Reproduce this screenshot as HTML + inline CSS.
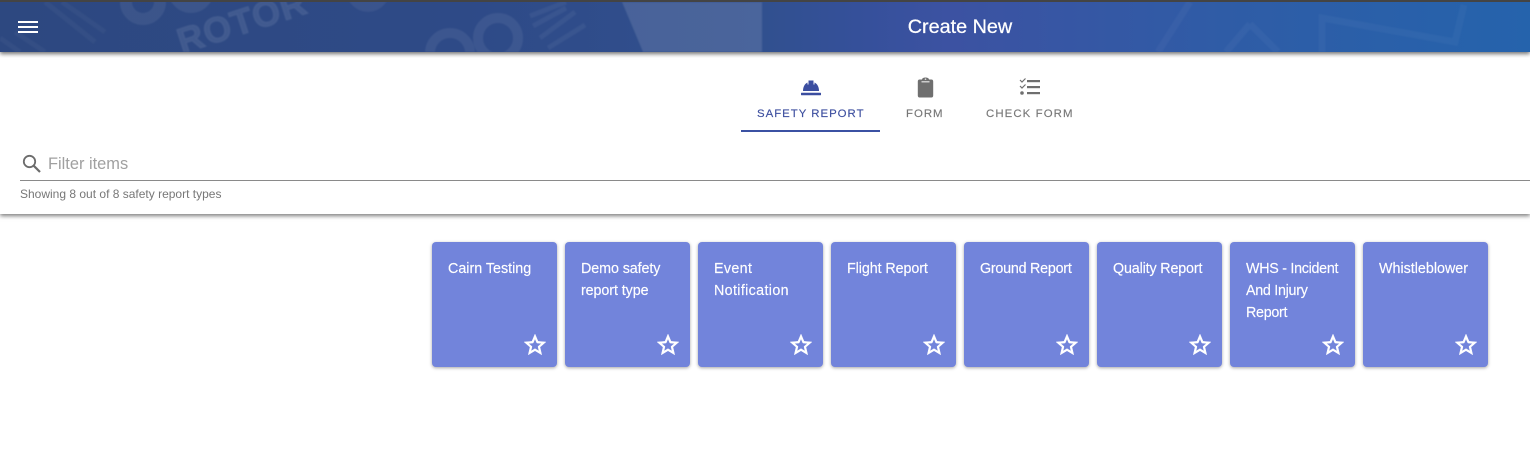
<!DOCTYPE html>
<html>
<head>
<meta charset="utf-8">
<style>
html,body{margin:0;padding:0;width:1530px;height:470px;overflow:hidden;background:#fff;font-family:"Liberation Sans",sans-serif}
.abs{position:absolute}
#hdr{left:0;top:0;width:1530px;height:52px;background:linear-gradient(90deg,#2d4880 0%,#2e4a87 30%,#31508f 50%,#35509a 56%,#3c52a2 62%,#2f5ca6 80%,#2563ac 100%);box-shadow:0 2px 4px rgba(0,0,0,.55);overflow:hidden;z-index:3}
#hdr:before{content:"";position:absolute;left:0;top:0;width:100%;height:2px;background:#444;z-index:2}
#title{left:0;width:1920px;top:15px;text-align:center;color:#fff;font-size:19.800px;line-height:24px;font-weight:400;-webkit-text-stroke:.25px #fff}
#panel{left:0;top:52px;width:1530px;height:162px;background:#fff;box-shadow:0 2px 4px rgba(0,0,0,.5);z-index:2}
.tab{position:absolute;top:107px;font-size:11.400px;line-height:14px;letter-spacing:1px;white-space:nowrap;color:#777;z-index:4;-webkit-text-stroke:.15px currentColor}
.card{position:absolute;top:242px;width:125px;height:125px;border-radius:4px;background:#7284db;box-shadow:0 1px 3px rgba(0,0,0,.35);color:#fff;font-size:14.300px;line-height:22px;-webkit-text-stroke:.15px #fff}
.card span{position:absolute;left:16px;top:16px;width:105px;white-space:nowrap}
.card svg{position:absolute;left:90px;top:90px}
.card path{stroke:#fff;stroke-width:.45}
</style>
</head>
<body>
<div id="hdr" class="abs">
<svg class="abs" style="left:0;top:0;filter:blur(.7px)" width="1530" height="52" viewBox="0 0 1530 52" fill="none">
  <g stroke="#ffffff" stroke-opacity=".035" stroke-width="5">
    <path d="M45 2 L95 42M62 2 L105 32M15 32 L45 52M0 38 L20 52"/>
  </g>
  <g stroke="#ffffff" stroke-opacity=".07">
    <circle cx="143" cy="2" r="17" stroke-width="12"/>
    <circle cx="191" cy="-10" r="17" stroke-width="12"/>
    <circle cx="450" cy="53" r="20" stroke-width="10"/>
    <ellipse cx="498" cy="38" rx="20" ry="20" stroke-width="10"/>
  </g>
  <circle cx="368" cy="-10" r="22" fill="#fff" fill-opacity=".06"/>
  <g stroke="#ffffff" stroke-opacity=".05" stroke-width="5">
    <path d="M530 16 L566 2M533 26 L566 8M540 38 L575 12M548 48 L585 25"/>
  </g>
  <path d="M622 2H762V52H643Z" fill="#fff" fill-opacity=".12"/>
  <g stroke="#ffffff" stroke-opacity=".035" stroke-width="7">
    <path d="M1190 2L1158 52M1250 24 L1278 52 M1250 24L1226 52"/>
    <path d="M1322 52V18L1455 42L1464 5"/>
  </g>
  <text x="182" y="54" transform="rotate(-18 182 54)" font-family="Liberation Sans" font-weight="700" font-size="36" fill="#fff" fill-opacity=".09" stroke="#fff" stroke-opacity=".05" stroke-width="1.500" letter-spacing="1">ROTOR</text>
</svg>
<svg class="abs" style="left:18px;top:20px" width="20" height="14"><rect y="1" width="20" height="2" fill="#fff"/><rect y="6" width="20" height="2" fill="#fff"/><rect y="11" width="20" height="2" fill="#fff"/></svg>
<div id="title" class="abs">Create New</div>
</div>

<div id="panel" class="abs"></div>

<svg class="abs" style="left:800px;top:77px;z-index:4" width="22" height="20" viewBox="0 0 22 20" fill="#3b4ea0"><path d="M3 14C3 10 4.500 7 7.500 5.500V7.500H8.500V3.500H13.500V7.500H14.500V5.500C17.500 7 19 10 19 14Z"/><rect x="1" y="15.700" width="20" height="2.500" rx=".5"/></svg>
<svg class="abs" style="left:916px;top:77px;z-index:4" width="18" height="21" viewBox="0 0 18 21"><path d="M3.500 2.500H6C6.300 1 7.500 .5 9.500 .5S12.700 1 13 2.500H15.500C16.500 2.500 17.200 3.300 17.200 4.500V18.500C17.200 19.700 16.500 20.500 15.500 20.500H3.500C2.500 20.500 1.800 19.700 1.800 18.500V4.500C1.800 3.300 2.500 2.500 3.500 2.500Z" fill="#6f6f6f"/><rect x="5.500" y="4" width="8" height="1.500" fill="#ccc"/><circle cx="9.500" cy="2.200" r=".8" fill="#ddd"/></svg>
<svg class="abs" style="left:1019px;top:77px;z-index:4" width="22" height="20" viewBox="0 0 22 20" fill="#6f6f6f"><rect x="8" y="3" width="13" height="2.200"/><rect x="8" y="9" width="13" height="2.200"/><rect x="8" y="15" width="13" height="2.200"/><path d="M1 3L3 5L6.500 1.500M1 9L3 11L6.500 7.500" fill="none" stroke="#6f6f6f" stroke-width="1.200"/><circle cx="3" cy="16" r="1.800"/></svg>

<div class="tab" style="left:757px;color:#3d4f9f;z-index:4">SAFETY REPORT</div>
<div class="tab" style="left:906px">FORM</div>
<div class="tab" style="left:986px;letter-spacing:1.1px">CHECK FORM</div>
<div class="abs" style="left:741px;top:130px;width:139px;height:2px;background:#3b51a3;z-index:4"></div>

<svg class="abs" style="left:21px;top:154px;z-index:4" width="21" height="21" viewBox="0 0 21 21" fill="none" stroke="#6c6c6c"><circle cx="8.500" cy="7.500" r="5.700" stroke-width="1.800"/><path d="M12.800 11.800L19 18" stroke-width="2.200"/></svg>
<div class="abs" style="left:48px;top:154px;font-size:16.400px;line-height:20px;color:#a0a0a0;z-index:4">Filter items</div>
<div class="abs" style="left:20px;top:180px;width:1510px;height:1px;background:#8a8a8a;z-index:4"></div>
<div class="abs" style="left:20px;top:187px;font-size:12px;line-height:14px;color:#777;z-index:4">Showing 8 out of 8 safety report types</div>

<div class="card" style="left:432px"><span>Cairn Testing</span><svg width="26" height="26" viewBox="0 0 24 24" fill="#fff"><path d="M22 9.240l-7.190-.62L12 2 9.190 8.630 2 9.240l5.460 4.730L5.820 21 12 17.270 18.180 21l-1.630-7.030L22 9.240zM12 15.400l-3.760 2.270 1-4.280-3.320-2.880 4.380-.38L12 6.100l1.710 4.040 4.380.38-3.320 2.880 1 4.280L12 15.400z"/></svg></div>
<div class="card" style="left:565px"><span style="letter-spacing:-.08px">Demo safety<br>report type</span><svg width="26" height="26" viewBox="0 0 24 24" fill="#fff"><path d="M22 9.240l-7.190-.62L12 2 9.190 8.630 2 9.240l5.460 4.730L5.820 21 12 17.270 18.180 21l-1.630-7.030L22 9.240zM12 15.400l-3.760 2.270 1-4.280-3.320-2.880 4.380-.38L12 6.100l1.710 4.040 4.380.38-3.320 2.880 1 4.280L12 15.400z"/></svg></div>
<div class="card" style="left:698px"><span style="letter-spacing:.35px">Event<br>Notification</span><svg width="26" height="26" viewBox="0 0 24 24" fill="#fff"><path d="M22 9.240l-7.190-.62L12 2 9.190 8.630 2 9.240l5.460 4.730L5.820 21 12 17.270 18.180 21l-1.630-7.030L22 9.240zM12 15.400l-3.760 2.270 1-4.280-3.320-2.880 4.380-.38L12 6.100l1.710 4.040 4.380.38-3.320 2.880 1 4.280L12 15.400z"/></svg></div>
<div class="card" style="left:831px"><span style="letter-spacing:-.08px">Flight Report</span><svg width="26" height="26" viewBox="0 0 24 24" fill="#fff"><path d="M22 9.240l-7.190-.62L12 2 9.190 8.630 2 9.240l5.460 4.730L5.820 21 12 17.270 18.180 21l-1.630-7.030L22 9.240zM12 15.400l-3.760 2.270 1-4.280-3.320-2.880 4.380-.38L12 6.100l1.710 4.040 4.380.38-3.320 2.880 1 4.280L12 15.400z"/></svg></div>
<div class="card" style="left:964px"><span style="letter-spacing:-.23px">Ground Report</span><svg width="26" height="26" viewBox="0 0 24 24" fill="#fff"><path d="M22 9.240l-7.190-.62L12 2 9.190 8.630 2 9.240l5.460 4.730L5.820 21 12 17.270 18.180 21l-1.630-7.030L22 9.240zM12 15.400l-3.760 2.270 1-4.280-3.320-2.880 4.380-.38L12 6.100l1.710 4.040 4.380.38-3.320 2.880 1 4.280L12 15.400z"/></svg></div>
<div class="card" style="left:1097px"><span style="letter-spacing:-.15px">Quality Report</span><svg width="26" height="26" viewBox="0 0 24 24" fill="#fff"><path d="M22 9.240l-7.190-.62L12 2 9.190 8.630 2 9.240l5.460 4.730L5.820 21 12 17.270 18.180 21l-1.630-7.030L22 9.240zM12 15.400l-3.760 2.270 1-4.280-3.320-2.880 4.380-.38L12 6.100l1.710 4.040 4.380.38-3.320 2.880 1 4.280L12 15.400z"/></svg></div>
<div class="card" style="left:1230px"><span style="letter-spacing:-.28px">WHS - Incident<br>And Injury<br>Report</span><svg width="26" height="26" viewBox="0 0 24 24" fill="#fff"><path d="M22 9.240l-7.190-.62L12 2 9.190 8.630 2 9.240l5.460 4.730L5.820 21 12 17.270 18.180 21l-1.630-7.030L22 9.240zM12 15.400l-3.760 2.270 1-4.280-3.320-2.880 4.380-.38L12 6.100l1.710 4.040 4.380.38-3.320 2.880 1 4.280L12 15.400z"/></svg></div>
<div class="card" style="left:1363px"><span>Whistleblower</span><svg width="26" height="26" viewBox="0 0 24 24" fill="#fff"><path d="M22 9.240l-7.190-.62L12 2 9.190 8.630 2 9.240l5.460 4.730L5.820 21 12 17.270 18.180 21l-1.630-7.030L22 9.240zM12 15.400l-3.760 2.270 1-4.280-3.320-2.880 4.380-.38L12 6.100l1.710 4.040 4.380.38-3.320 2.880 1 4.280L12 15.400z"/></svg></div>
</body>
</html>
